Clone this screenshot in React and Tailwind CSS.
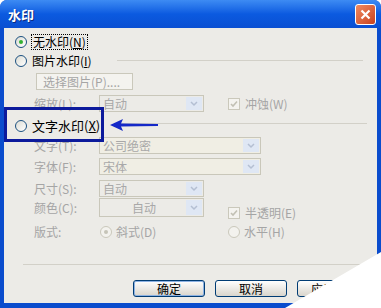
import React from 'react'

const font = "font-['SimSun','Noto_Sans_CJK_SC',sans-serif]"

function Radio({ checked, disabled }) {
    return (
        <span
            className={`relative inline-flex w-[12px] h-[12px] rounded-full border items-center justify-center shrink-0 ${
                disabled ? 'border-[#cac8bb] bg-[#f3f2ee]' : 'border-[#1c5180] bg-gradient-to-br from-[#dcdcd4] to-white'
            }`}
        >
            {checked && (
                <span className={`w-[4px] h-[4px] rounded-full ${disabled ? 'bg-[#c6c4b8]' : 'bg-[#31b031]'}`} />
            )}
        </span>
    )
}

function Check() {
    return (
        <span className="inline-flex w-[12px] h-[12px] border border-[#cac8bb] bg-[#f4f3ef] items-center justify-center shrink-0">
            <svg width="8" height="8" viewBox="0 0 8 8">
                <path d="M1 4 L3 6 L7 1.5" fill="none" stroke="#c2c0b4" strokeWidth="1.6" />
            </svg>
        </span>
    )
}

function Select({ value, wide, center, tint }) {
    return (
        <div
            className={`flex h-full border border-[#c9c7ba] ${tint ? 'bg-[#f0eee4]' : 'bg-[#ecebe7]'} ${
                wide ? 'w-[162px]' : 'w-[105px]'
            }`}
        >
            <span className={`flex-1 flex items-center text-[#a8a8a8] pl-[3px] ${center ? 'justify-center' : ''}`}>{value}</span>
            <span className="w-[16px] m-[1px] bg-[#dfe7f4] flex items-center justify-center">
                <svg width="8" height="6" viewBox="0 0 8 6">
                    <path d="M1 1 L4 4 L7 1" fill="none" stroke="#b4bfd2" strokeWidth="1.5" />
                </svg>
            </span>
        </div>
    )
}

function Btn({ children, def, left }) {
    return (
        <div
            className={`w-[72px] h-[17px] rounded-[3px] border border-[#003c74] bg-gradient-to-b from-white to-[#d9d5cc] flex items-center text-black ${
                left ? 'justify-start pl-[13px]' : 'justify-center'
            } ${def ? 'shadow-[inset_0_0_0_1px_#8db2e3]' : ''}`}
        >
            {children}
        </div>
    )
}

export default function App() {
    return (
        <div className={`w-[381px] h-[308px] bg-white overflow-hidden text-[12px] leading-none ${font}`}>
            <div className="relative w-[381px] h-[308px] rounded-t-[7px] bg-[#0a4ccd] flex flex-col">
                {/* 标题栏 */}
                <div className="h-[28px] shrink-0 rounded-t-[7px] bg-gradient-to-b from-[#3d8bf3] via-[#0b5ae0] to-[#0a4fd2] flex items-center justify-between pl-[8px] pr-[5px]">
                    <span className="text-white font-bold text-[13px] [text-shadow:1px_1px_0_#0a2a80]">水印</span>
                    <span className="w-[21px] h-[21px] rounded-[3px] border border-white bg-gradient-to-br from-[#f08a60] to-[#c8401c] flex items-center justify-center">
                        <svg width="11" height="11" viewBox="0 0 11 11">
                            <path d="M1.5 1.5 L9.5 9.5 M9.5 1.5 L1.5 9.5" stroke="white" strokeWidth="2.2" />
                        </svg>
                    </span>
                </div>

                {/* 内容 */}
                <div className="relative mx-[4px] h-[275px] bg-[#ecebe7] pt-[5px] text-[#a5a5a5]">
                    <div className="h-[17px] flex items-center pl-[11px] gap-[4px] text-black">
                        <Radio checked />
                        <span className="border border-dotted border-black px-[1px] py-[1px]">
                            无水印(<span className="underline">N</span>)
                        </span>
                    </div>
                    <div className="mt-[2px] h-[17px] flex items-center pl-[11px] gap-[5px] text-black">
                        <Radio />
                        <span>
                            图片水印(<span className="underline">I</span>)
                        </span>
                        <span className="ml-auto mr-[14px] w-[246px] border-t border-[#d2d0c8]" />
                    </div>
                    <div className="mt-[4px] h-[17px] pl-[32px]">
                        <div className="w-[97px] h-full border border-[#cac8bb] bg-[#f4f3ef] flex items-center pl-[6px]">
                            选择图片(P)....
                        </div>
                    </div>
                    <div className="mt-[5px] h-[17px] flex items-center">
                        <span className="w-[95px] pl-[30px]">缩放(L):</span>
                        <Select value="自动" />
                        <span className="ml-[24px] flex items-center gap-[5px]">
                            <Check />
                            冲蚀(W)
                        </span>
                    </div>
                    <div className="mt-[5px] h-[17px] flex items-center pl-[11px] gap-[5px] text-black">
                        <Radio />
                        <span className="text-[13px]">
                            文字水印(<span className="underline">X</span>)
                        </span>
                        <span className="ml-auto mr-[10px] w-[246px] border-t border-[#d2d0c8] -mt-[4px]" />
                    </div>
                    <div className="mt-[3px] h-[17px] flex items-center">
                        <span className="w-[95px] pl-[30px]">文字(T):</span>
                        <Select value="公司绝密" wide tint />
                    </div>
                    <div className="mt-[4px] h-[17px] flex items-center">
                        <span className="w-[95px] pl-[30px]">字体(F):</span>
                        <Select value="宋体" wide tint />
                    </div>
                    <div className="mt-[5px] h-[17px] flex items-center">
                        <span className="w-[95px] pl-[30px]">尺寸(S):</span>
                        <Select value="自动" />
                    </div>
                    <div className="mt-[1px] h-[19px] flex items-center">
                        <span className="w-[95px] pl-[30px]">颜色(C):</span>
                        <Select value="自动" center />
                        <span className="ml-[24px] flex items-center gap-[5px] mt-[10px]">
                            <Check />
                            半透明(E)
                        </span>
                    </div>
                    <div className="mt-[6px] h-[17px] flex items-center">
                        <span className="w-[96px] pl-[30px]">版式:</span>
                        <span className="w-[128px] flex items-center gap-[4px]">
                            <Radio checked disabled />
                            斜式(D)
                        </span>
                        <span className="flex items-center gap-[4px]">
                            <Radio disabled />
                            水平(H)
                        </span>
                    </div>
                    <div className="mt-[24px] ml-[19px] mr-[14px] border-t border-[#d2d0c8]" />
                    <div className="mt-[15px] flex pl-[129px] gap-[10px]">
                        <Btn def>确定</Btn>
                        <Btn>取消</Btn>
                        <Btn left>应用</Btn>
                    </div>

                    {/* 标注框和箭头 */}
                    <div className="absolute left-0 top-[79px] w-[100px] h-[35px] border-[3px] border-[#0c1a9c]" />
                    <svg className="absolute left-[105px] top-[90px]" width="50" height="14" viewBox="0 0 50 14">
                        <path d="M1 7 L14 1 L12 5.5 L49 6 L49 8 L12 8.5 L14 13 Z" fill="#1428c8" />
                    </svg>
                </div>

                {/* 右下角卷页 */}
                <div className="absolute inset-0 bg-white [clip-path:polygon(285px_308px,381px_252px,381px_308px)]" />
            </div>
        </div>
    )
}
